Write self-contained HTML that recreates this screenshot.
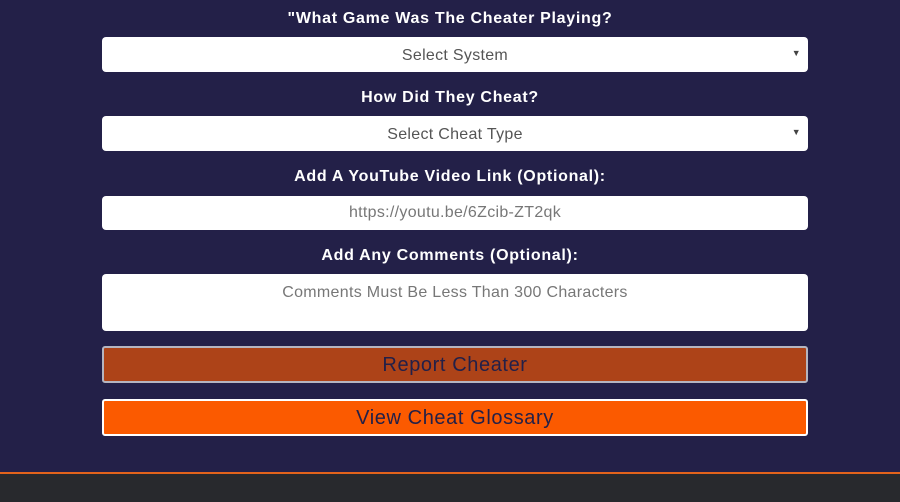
<!DOCTYPE html><html><head><style>
body{margin:0;width:900px;height:500px;background:#232048;font-family:"Liberation Sans",sans-serif;position:relative;overflow:hidden}
.l{position:absolute;left:0;width:900px;text-align:center;color:#fff;font-weight:bold;font-size:16px;letter-spacing:0.7px}
.b{position:absolute;left:102px;width:706px;background:#fff;border-radius:4px;box-sizing:border-box;text-align:center;color:#555;font-size:16px;letter-spacing:0.3px}
.a{position:absolute;right:7px;top:11px;font-size:9px;line-height:10px;color:#444}
.btn{position:absolute;left:102px;width:706px;box-sizing:border-box;border-radius:3px;text-align:center;color:#232048;font-size:20px;letter-spacing:0.6px}
</style></head><body>
<div class="l" style="top:10px">"What Game Was The Cheater Playing?</div>
<div class="b" style="top:37px;height:35px;line-height:37px">Select System<span class="a">▼</span></div>
<div class="l" style="top:89px">How Did They Cheat?</div>
<div class="b" style="top:116px;height:35px;line-height:37px">Select Cheat Type<span class="a">▼</span></div>
<div class="l" style="top:168px">Add A YouTube Video Link (Optional):</div>
<div class="b" style="top:196px;height:34px;line-height:34px;color:#777">https://youtu.be/6Zcib-ZT2qk</div>
<div class="l" style="top:247px">Add Any Comments (Optional):</div>
<div class="b" style="top:274px;height:57px;padding-top:10px;color:#777">Comments Must Be Less Than 300 Characters</div>
<div class="btn" style="top:346px;height:37px;line-height:35px;background:#ad4318;border:2px solid #b5b5c0">Report Cheater</div>
<div class="btn" style="top:399px;height:37px;line-height:35px;background:#fb5a00;border:2px solid #fff">View Cheat Glossary</div>
<div style="position:absolute;left:0;top:472px;width:900px;height:28px;background:#28292d;border-top:2px solid #e2631c"></div>
</body></html>
